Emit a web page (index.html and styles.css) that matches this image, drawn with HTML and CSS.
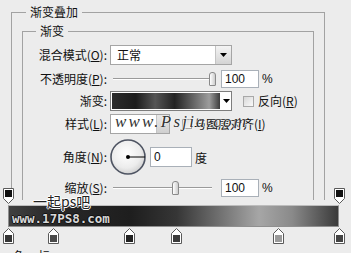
FILE: index.html
```html
<!DOCTYPE html>
<html lang="zh">
<head>
    <meta charset="UTF-8">
    <title>渐变叠加</title>
    <link rel="stylesheet" href="styles.css">
</head>
<body>
<div class="group outer">
    <span class="group-title">渐变叠加</span>
    <div class="group inner">
        <span class="group-title">渐变</span>
        <div class="rows">
            <div class="row r1">
                <span class="lbl">混合模式(<u>O</u>):</span>
                <div class="select">
                    <span class="select-text">正常</span>
                    <span class="select-btn"><svg width="7" height="4" viewBox="0 0 7 4"><path d="M0 0H7L3.5 4Z" fill="#000"/></svg></span>
                </div>
            </div>
            <div class="row r2">
                <span class="lbl">不透明度(<u>P</u>):</span>
                <div class="slider">
                    <span class="slider-track"></span>
                    <span class="slider-thumb" style="left: 99px"></span>
                </div>
                <span class="num">100</span>
                <span class="unit">%</span>
            </div>
            <div class="row r3">
                <span class="lbl">渐变:</span>
                <div class="grad-select">
                    <span class="grad-fill"></span>
                    <span class="grad-btn"><svg width="7" height="4" viewBox="0 0 7 4"><path d="M0 0H7L3.5 4Z" fill="#000"/></svg></span>
                </div>
                <span class="check"></span>
                <span class="check-label">反向(<u>R</u>)</span>
            </div>
            <div class="row r4">
                <span class="lbl">样式(<u>L</u>):</span>
                <div class="style-select">
                    <span class="style-btn"></span>
                </div>
                <span class="check check-small"></span>
                <span class="check-label">与图层对齐(<u>I</u>)</span>
                <span class="wm-site">www.Psjia.com</span>
            </div>
            <div class="row r5">
                <span class="lbl">角度(<u>N</u>):</span>
                <svg class="dial" width="36" height="36" viewBox="0 0 36 36">
                    <defs>
                        <radialGradient id="dialbg" cx="45%" cy="40%" r="60%">
                            <stop offset="0" stop-color="#ffffff"/>
                            <stop offset="0.7" stop-color="#ececec"/>
                            <stop offset="1" stop-color="#d2d2d2"/>
                        </radialGradient>
                    </defs>
                    <circle cx="18" cy="18" r="17" fill="url(#dialbg)" stroke="#4e5462" stroke-width="1.6"/>
                    <line x1="18" y1="18" x2="35" y2="18" stroke="#000" stroke-width="1"/>
                    <circle cx="18" cy="18" r="2" fill="#000"/>
                </svg>
                <span class="num num-wide">0</span>
                <span class="unit">度</span>
            </div>
            <div class="row r6">
                <span class="lbl">缩放(<u>S</u>):</span>
                <div class="slider">
                    <span class="slider-track"></span>
                    <span class="slider-thumb" style="left: 62px"></span>
                </div>
                <span class="num">100</span>
                <span class="unit">%</span>
            </div>
        </div>
    </div>
</div>

<div class="editor">
    <div class="bar"></div>
    <span class="wm-cn">一起ps吧</span>
    <span class="wm-url">www.17PS8.com</span>

    <svg class="stop stop-top" style="left: 3px" width="11" height="16" viewBox="0 0 11 16"><path d="M0.5 0.5H10.5V10.5L5.5 15.5L0.5 10.5Z" fill="#fff" stroke="#5a5a5a"/><rect x="2" y="2" width="7" height="7" fill="#111"/></svg>
    <svg class="stop stop-top" style="left: 334px" width="11" height="16" viewBox="0 0 11 16"><path d="M0.5 0.5H10.5V10.5L5.5 15.5L0.5 10.5Z" fill="#fff" stroke="#5a5a5a"/><rect x="2" y="2" width="7" height="7" fill="#111"/></svg>

    <svg class="stop stop-bottom" style="left: 3px" width="11" height="16" viewBox="0 0 11 16"><path d="M5.5 0.5L10.5 5.5V15.5H0.5V5.5Z" fill="#fff" stroke="#5a5a5a"/><rect x="2" y="7" width="7" height="7" fill="#363636"/></svg>
    <svg class="stop stop-bottom" style="left: 48px" width="11" height="16" viewBox="0 0 11 16"><path d="M5.5 0.5L10.5 5.5V15.5H0.5V5.5Z" fill="#fff" stroke="#5a5a5a"/><rect x="2" y="7" width="7" height="7" fill="#4a4a4a"/></svg>
    <svg class="stop stop-bottom" style="left: 124px" width="11" height="16" viewBox="0 0 11 16"><path d="M5.5 0.5L10.5 5.5V15.5H0.5V5.5Z" fill="#fff" stroke="#5a5a5a"/><rect x="2" y="7" width="7" height="7" fill="#222"/></svg>
    <svg class="stop stop-bottom" style="left: 171px" width="11" height="16" viewBox="0 0 11 16"><path d="M5.5 0.5L10.5 5.5V15.5H0.5V5.5Z" fill="#fff" stroke="#5a5a5a"/><rect x="2" y="7" width="7" height="7" fill="#3a3a3a"/></svg>
    <svg class="stop stop-bottom" style="left: 273px" width="11" height="16" viewBox="0 0 11 16"><path d="M5.5 0.5L10.5 5.5V15.5H0.5V5.5Z" fill="#fff" stroke="#5a5a5a"/><rect x="2" y="7" width="7" height="7" fill="#9a9a9a"/></svg>
    <svg class="stop stop-bottom" style="left: 334px" width="11" height="16" viewBox="0 0 11 16"><path d="M5.5 0.5L10.5 5.5V15.5H0.5V5.5Z" fill="#fff" stroke="#5a5a5a"/><rect x="2" y="7" width="7" height="7" fill="#444"/></svg>

    <span class="cut">色标</span>
</div>
</body>
</html>
```

FILE: styles.css
```css
body {
    margin: 0;
    height: 253px;
    overflow: hidden;
    position: relative;
    background: #ececec;
    font-family: "Noto Sans CJK SC", sans-serif;
    font-size: 12px;
    color: #111;
}
.group {
    border: 1px solid #a2a2a2;
    border-bottom: none;
    box-sizing: border-box;
}
.outer {
    margin: 12px 0 0 11px;
    width: 314px;
    height: 188px;
}
.inner {
    margin: 12px 0 0 10px;
    width: 292px;
    height: 169px;
}
.group-title {
    display: block;
    width: fit-content;
    height: 14px;
    margin: -8px 0 0 14px;
    padding: 0 4px;
    background: #ececec;
    line-height: 14px;
}
.inner .group-title {
    margin-left: 13px;
}
.rows {
    padding-top: 7px;
}
.row {
    display: flex;
    align-items: center;
    height: 20px;
    position: relative;
}
.r2 { margin-top: 3px; height: 22px; }
.r3 { margin-top: 1px; }
.r4 { margin-top: 3px; }
.r5 { margin-top: 5px; height: 36px; }
.r6 { margin-top: 3px; }
.lbl {
    width: 84px;
    margin-right: 3px;
    text-align: right;
    white-space: nowrap;
    line-height: 14px;
}
.select {
    display: flex;
    width: 122px;
    height: 20px;
    box-sizing: border-box;
    border: 1px solid #a5a5a5;
    background: #fff;
}
.select-text {
    flex: 1;
    padding-left: 6px;
    line-height: 18px;
}
.select-btn {
    width: 15px;
    display: flex;
    align-items: center;
    justify-content: center;
    border-left: 1px solid #c4c4c4;
    background: linear-gradient(#f4f4f4, #d4d4d4);
}
.slider {
    position: relative;
    width: 107px;
    height: 14px;
}
.slider-track {
    position: absolute;
    left: 3px;
    right: 5px;
    top: 6px;
    height: 1px;
    background: #9a9a9a;
    border-bottom: 1px solid #fff;
}
.slider-thumb {
    position: absolute;
    top: 0;
    width: 5px;
    height: 12px;
    border: 1px solid #8a8a8a;
    border-radius: 3px 3px 1px 1px;
    background: linear-gradient(to right, #fff, #cdcdcd);
}
.num {
    width: 38px;
    height: 18px;
    box-sizing: border-box;
    margin-left: 4px;
    padding-left: 3px;
    border: 1px solid #a9b0b8;
    background: #fff;
    font-family: "Liberation Sans", sans-serif;
    font-size: 12px;
    line-height: 16px;
}
.num-wide {
    width: 42px;
    height: 20px;
    line-height: 18px;
}
.unit {
    margin-left: 3px;
    font-family: "Liberation Sans", "Noto Sans CJK SC", sans-serif;
    font-size: 12px;
}
.grad-select {
    display: flex;
    width: 122px;
    height: 20px;
    box-sizing: border-box;
    border: 1px solid #7d7d7d;
    background: #fff;
}
.grad-fill {
    flex: 1;
    margin: 1px;
    background: linear-gradient(to right, #2c2c2c 0%, #1c1c1c 22%, #555 40%, #232323 58%, #9c9c9c 90%, #3c3c3c 100%);
}
.grad-btn {
    width: 10px;
    display: flex;
    align-items: center;
    justify-content: center;
}
.check {
    width: 11px;
    height: 11px;
    box-sizing: border-box;
    margin-left: 11px;
    border: 1px solid #a8a8a8;
    background: linear-gradient(135deg, #d8d8d8, #fafafa);
}
.check-label {
    margin-left: 4px;
    white-space: nowrap;
    line-height: 14px;
}
.style-select {
    display: flex;
    width: 60px;
    height: 20px;
    box-sizing: border-box;
    border: 1px solid #a5a5a5;
    background: #fff;
}
.style-btn {
    width: 12px;
    margin-left: auto;
    background: linear-gradient(#e8e8e8, #cfcfcf);
    border-left: 1px solid #c4c4c4;
}
.check-small {
    width: 10px;
    height: 10px;
    margin-left: 12px;
}
.r4 .check-label {
    margin-left: 2px;
}
.wm-site {
    position: absolute;
    left: 92px;
    top: -2px;
    font-family: "Liberation Serif", serif;
    font-style: italic;
    font-size: 17px;
    letter-spacing: 2.2px;
    color: #333;
    text-shadow: 1px 0 rgba(255, 255, 255, 0.7), -1px 0 rgba(255, 255, 255, 0.7);
    white-space: nowrap;
}
.dial {
    display: block;
}
.editor {
    position: absolute;
    left: 0;
    top: 183px;
    width: 351px;
    height: 70px;
    padding-top: 22px;
    box-sizing: border-box;
}
.bar {
    margin-left: 8px;
    width: 331px;
    height: 22px;
    box-sizing: border-box;
    border: 1px solid #8f8f8f;
    border-top-color: #bdbdbd;
    background: linear-gradient(to right, #404040 0%, #282828 14%, #1e1e1e 37%, #363636 51%, #a6a6a6 76%, #8a8a8a 86%, #3a3a3a 100%);
}
.stop {
    position: absolute;
}
.stop-top {
    top: 5px;
}
.stop-bottom {
    top: 45px;
}
.wm-cn {
    position: absolute;
    left: 33px;
    top: 10px;
    font-size: 14px;
    line-height: 16px;
    color: #222;
    text-shadow: 1px 0 #fff, -1px 0 #fff, 0 1px #fff, 0 -1px #fff;
}
.wm-url {
    position: absolute;
    left: 12px;
    top: 30px;
    font-family: "DejaVu Sans Mono", monospace;
    font-weight: bold;
    font-size: 12.5px;
    line-height: 12px;
    color: #d8d8d8;
    text-shadow: 1px 0 #111, -1px 0 #111, 0 1px #111, 0 -1px #111;
}
.cut {
    position: absolute;
    left: 13px;
    top: 66px;
    letter-spacing: 13px;
    line-height: 14px;
}
```
